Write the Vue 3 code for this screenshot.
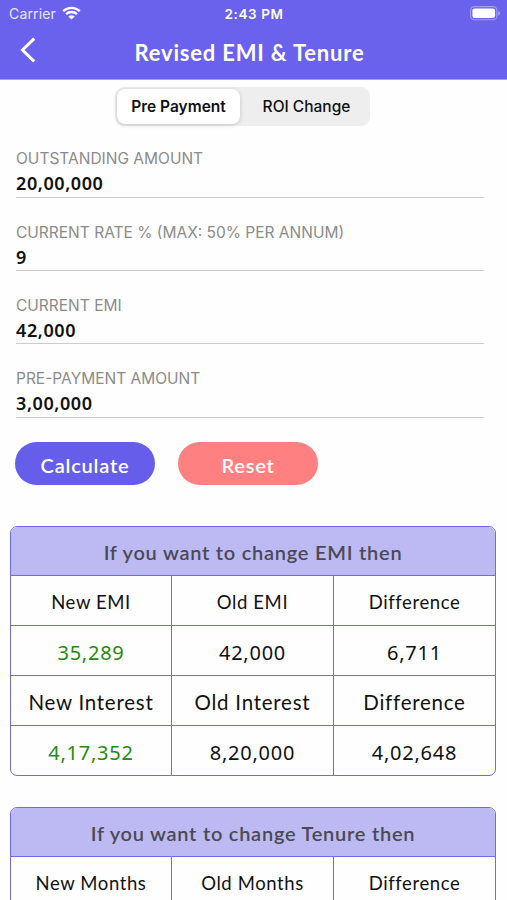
<script setup>
import { ref } from 'vue'

const tabs = ['Pre Payment', 'ROI Change']
const activeTab = ref('Pre Payment')

const fields = [
  { label: 'OUTSTANDING AMOUNT', value: '20,00,000' },
  { label: 'CURRENT RATE % (MAX: 50% PER ANNUM)', value: '9' },
  { label: 'CURRENT EMI', value: '42,000' },
  { label: 'PRE-PAYMENT AMOUNT', value: '3,00,000' }
]

const tables = [
  {
    title: 'If you want to change EMI then',
    rows: [
      { type: 'label', cells: ['New EMI', 'Old EMI', 'Difference'] },
      { type: 'value', cells: ['35,289', '42,000', '6,711'] },
      { type: 'label large', cells: ['New Interest', 'Old Interest', 'Difference'] },
      { type: 'value', cells: ['4,17,352', '8,20,000', '4,02,648'] }
    ]
  },
  {
    title: 'If you want to change Tenure then',
    rows: [
      { type: 'label', cells: ['New Months', 'Old Months', 'Difference'] }
    ]
  }
]
</script>

<template>
  <div class="screen">
    <header class="header">
      <div class="status-bar">
        <div class="carrier">
          <span>Carrier</span>
          <svg class="wifi" width="19" height="14" viewBox="0 0 19 14">
            <path d="M1.2 5.2C5.8 .8 13.2 .8 17.8 5.2M4.1 8.1C7.1 5.3 11.9 5.3 14.9 8.1" fill="none" stroke="#fff" stroke-width="2.3" />
            <path d="M6.3 10.4C8.1 8.8 10.9 8.8 12.7 10.4L9.5 13.6Z" fill="#fff" />
          </svg>
        </div>
        <span class="time">2:43 PM</span>
        <div class="battery-wrap">
          <svg width="31" height="15" viewBox="0 0 31 15">
            <rect x=".6" y=".6" width="26.3" height="13.2" rx="3.8" fill="none" stroke="#fff" stroke-opacity=".4" stroke-width="1.1" />
            <rect x="2.4" y="2.4" width="22.7" height="9.6" rx="2.2" fill="#fff" />
            <path d="M28.3 5C30.6 5.8 30.6 8.8 28.3 9.6Z" fill="#fff" fill-opacity=".45" />
          </svg>
        </div>
      </div>
      <div class="nav-bar">
        <svg class="back" width="16" height="26" viewBox="0 0 16 26">
          <path d="M14.2 1.6L2.5 13L14.2 24.4" fill="none" stroke="#fff" stroke-width="3" />
        </svg>
        <h1 class="title">Revised EMI &amp; Tenure</h1>
      </div>
    </header>

    <div class="segmented">
      <div
        v-for="tab in tabs"
        :key="tab"
        class="segment"
        :class="{ active: tab === activeTab }"
        @click="activeTab = tab"
      >{{ tab }}</div>
    </div>

    <div class="form">
      <div v-for="field in fields" :key="field.label" class="field">
        <div class="field-label">{{ field.label }}</div>
        <div class="field-value">{{ field.value }}</div>
      </div>
    </div>

    <div class="buttons">
      <button class="btn calculate">Calculate</button>
      <button class="btn reset">Reset</button>
    </div>

    <div v-for="table in tables" :key="table.title" class="result">
      <div class="result-title">{{ table.title }}</div>
      <div v-for="(row, i) in table.rows" :key="i" class="row" :class="row.type">
        <div v-for="(cell, j) in row.cells" :key="j" class="cell">{{ cell }}</div>
      </div>
    </div>
  </div>
</template>

<style>
body {
  margin: 0;
  background: #fff;
  overflow: hidden;
}
</style>

<style scoped>
.screen {
  width: 507px;
  height: 900px;
  overflow: hidden;
  background: #fefefe;
  color: #111;
  font-family: Lato, "Noto Sans", sans-serif;
}

.header {
  height: 80px;
  box-sizing: border-box;
  background: #6a62ec;
  border-bottom: 1px solid #a6a2ee;
  color: #fff;
}

.status-bar {
  display: grid;
  grid-template-columns: 1fr auto 1fr;
  align-items: center;
  height: 27px;
  padding: 0 6px 0 9px;
  font-family: Inter, sans-serif;
  font-size: 14px;
}

.carrier {
  display: flex;
  align-items: center;
  gap: 6px;
  color: #e9e7ff;
  letter-spacing: 0.15px;
}

.wifi {
  margin-top: -2px;
}

.time {
  margin-right: 2px;
  font-size: 13.5px;
  font-weight: 600;
  letter-spacing: 0.6px;
}

.battery-wrap {
  display: flex;
  justify-content: flex-end;
}

.nav-bar {
  display: grid;
  grid-template-columns: 40px 1fr 40px;
  align-items: center;
  height: 50px;
}

.back {
  margin: -4px 0 0 20px;
}

.title {
  margin: 0;
  padding: 1px 8px 0 0;
  text-align: center;
  font-size: 22px;
  line-height: 30px;
  font-weight: 700;
  letter-spacing: 0.8px;
}

.segmented {
  display: flex;
  width: 255px;
  height: 39px;
  box-sizing: border-box;
  margin: 7px 0 0 115px;
  padding: 2px;
  border-radius: 9px;
  background: #eee;
  font-family: Inter, sans-serif;
}

.segment {
  flex: 1;
  display: flex;
  align-items: center;
  justify-content: center;
  padding-left: 5px;
  border-radius: 8px;
  font-size: 15.5px;
  font-weight: 500;
}

.segment.active {
  flex: 0 0 123px;
  padding-left: 0;
  background: #fff;
  box-shadow: 0 1px 4px rgba(0, 0, 0, 0.18);
  font-weight: 600;
}

.form {
  padding: 21.5px 23px 0 16px;
}

.field {
  height: 50px;
  box-sizing: border-box;
  margin-bottom: 23.4px;
  padding-top: 0.8px;
  border-bottom: 1.5px solid #ccc;
}

.field-label {
  height: 22px;
  line-height: 22px;
  font-family: Inter, sans-serif;
  font-size: 15.5px;
  color: #8b8b8b;
}

.field-value {
  line-height: 27px;
  font-family: "Noto Sans", sans-serif;
  font-size: 18px;
  font-weight: 600;
  letter-spacing: 0.6px;
}

.buttons {
  display: flex;
  gap: 23px;
  padding: 0.6px 0 0 15px;
}

.btn {
  width: 140px;
  height: 43px;
  padding: 4px 0 0;
  border: none;
  border-radius: 22px;
  color: #fff;
  font-family: inherit;
  font-size: 20px;
  font-weight: 600;
  letter-spacing: 0.8px;
}

.calculate {
  background: #665eea;
}

.reset {
  background: #ff8080;
}

.result {
  width: 486px;
  box-sizing: border-box;
  margin: 41px 0 0 10px;
  border: 1.5px solid #7568e6;
  border-radius: 7px;
  overflow: hidden;
}

.result + .result {
  margin-top: 31px;
}

.result-title {
  height: 48px;
  box-sizing: border-box;
  background: #bdb9f2;
  color: #4a4a55;
  text-align: center;
  font-size: 20px;
  line-height: 50px;
  font-weight: 600;
  letter-spacing: 0.75px;
}

.row {
  display: grid;
  grid-template-columns: 160px 162px 1fr;
  height: 50px;
  box-sizing: border-box;
  border-top: 1.5px solid #7568e6;
}

.cell {
  padding-top: 2px;
  text-align: center;
  line-height: 48px;
  font-size: 18.5px;
  letter-spacing: 0.6px;
}

.cell + .cell {
  border-left: 1.5px solid #7568e6;
}

.large .cell {
  font-size: 20.5px;
  letter-spacing: 0.75px;
}

.value .cell {
  padding-top: 3px;
  font-family: "Noto Sans", sans-serif;
  font-size: 20px;
  letter-spacing: 0.75px;
}

.value .cell:first-child {
  color: #258a0e;
}
</style>
